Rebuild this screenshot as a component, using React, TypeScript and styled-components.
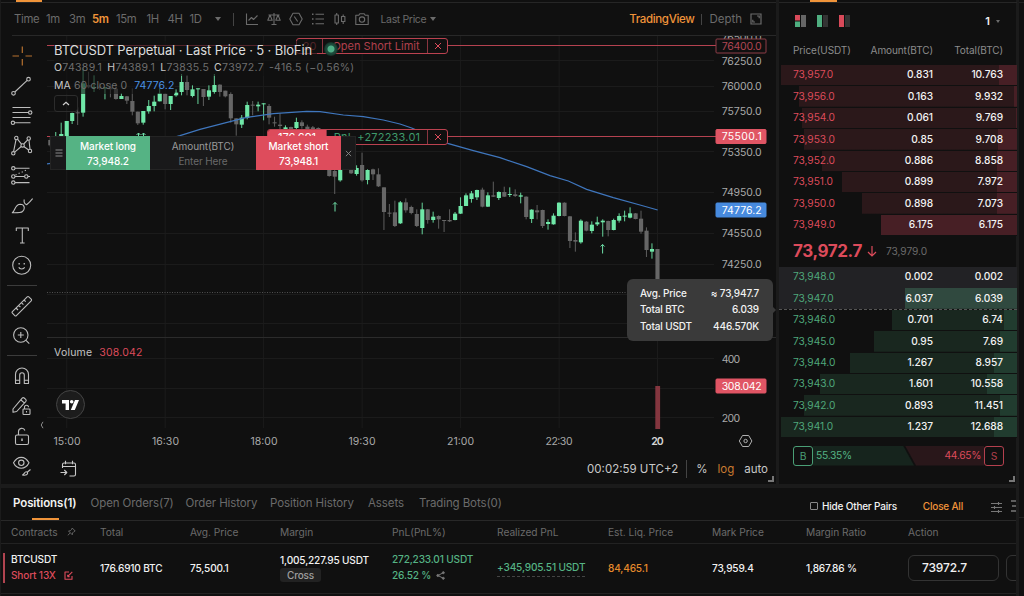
import React from "react";
import styled, { createGlobalStyle } from "styled-components";

const c = {
  bg: "#101010",
  gutter: "#1b1b1b",
  orange: "#f0943a",
  red: "#dd4b5b",
  green: "#55b384",
  dim: "#6b6b6b",
  text: "#f2f2f2",
  blue: "#4a90e2",
};

const Global = createGlobalStyle`
  * { box-sizing: border-box; }
  body { margin: 0; background: ${c.bg}; overflow: hidden; }
  svg { display: block; flex: none; }
`;

const Page = styled.div`
  width: 1024px;
  height: 596px;
  overflow: hidden;
  display: grid;
  grid-template-columns: 1fr 8px;
  background: ${c.bg};
  color: ${c.text};
  font-family: Inter, "Liberation Sans", sans-serif;
  font-size: 10.5px;
  white-space: nowrap;
`;

const Workspace = styled.div`
  display: grid;
  grid-template-rows: 484px 1fr;
  min-width: 0;
  border-left: 1px solid ${c.gutter};
`;

const Upper = styled.div`
  display: grid;
  grid-template-columns: 775px 1fr;
  min-width: 0;
`;

const SideStrip = styled.div`
  border-left: 3px solid ${c.gutter};
  background: linear-gradient(#222, #222) 0 2px / 100% 1px no-repeat, linear-gradient(#222, #222) 0 517px / 100% 1px no-repeat;
`;

/* Chart panel */

const ChartPanel = styled.section`
  display: grid;
  grid-template-rows: 3px 32px 1px 416px 1fr;
  min-width: 0;
`;

const TabEdge = styled.div<{ $left: number; $width: number }>`
  height: 3px;
  border-bottom: 1px solid #262626;
  padding-left: ${(p) => p.$left}px;
  &::before {
    content: "";
    display: block;
    width: ${(p) => p.$width}px;
    height: 2px;
    background: ${c.orange};
  }
`;

const Toolbar = styled.div`
  display: flex;
  align-items: center;
  justify-content: space-between;
  padding: 0 14px 0 13px;
  color: ${c.dim};
`;

const ToolGroup = styled.div`
  display: flex;
  align-items: center;
`;

const Interval = styled.span<{ $w: number; $active?: boolean }>`
  width: ${(p) => p.$w}px;
  font-size: 11.3px;
  letter-spacing: -0.3px;
  color: ${(p) => (p.$active ? c.orange : c.dim)};
  font-weight: ${(p) => (p.$active ? 600 : 400)};
`;

const Caret = styled.i<{ $size?: number }>`
  border: ${(p) => p.$size ?? 3.5}px solid transparent;
  border-top: ${(p) => (p.$size ?? 3.5) + 1}px solid ${c.dim};
  border-bottom: 0;
`;

const VRule = styled.i<{ $h: number; $m: string }>`
  width: 1px;
  height: ${(p) => p.$h}px;
  margin: ${(p) => p.$m};
  background: #444;
`;

const IconRow = styled.div`
  display: flex;
  align-items: center;
  gap: 8px;
`;

const PriceMode = styled.span`
  display: flex;
  align-items: center;
  gap: 4px;
  margin-left: 12px;
  font-size: 10.5px;
  letter-spacing: -0.35px;
`;

const ViewLink = styled.span<{ $active?: boolean }>`
  font-size: 11.5px;
  color: ${(p) => (p.$active ? c.orange : c.dim)};
  font-weight: ${(p) => (p.$active ? 500 : 400)};
  letter-spacing: ${(p) => (p.$active ? "-0.35px" : "0")};
`;

const ExpandIcon = styled.svg`
  margin-left: 8px;
`;

const ToolbarLine = styled.div`
  margin-left: 11px;
  background: #282828;
`;

const ChartBody = styled.div`
  display: grid;
  grid-template-columns: 46px 729px;
  grid-row: 4 / 6;
  min-height: 0;
`;

const DrawTools = styled.nav`
  display: flex;
  flex-direction: column;
  padding-top: 5px;
  position: relative;
  color: #bdbdbd;
`;

const DrawTool = styled.div<{ $color?: string }>`
  height: 30px;
  flex: none;
  width: 40px;
  display: flex;
  align-items: center;
  justify-content: center;
  color: ${(p) => p.$color ?? "inherit"};
`;

const ToolDivider = styled.div`
  height: 10px;
  flex: none;
  padding: 4px 0 0 6px;
  &::before {
    content: "";
    display: block;
    width: 30px;
    height: 1px;
    background: #3c3c3c;
  }
`;

const Collapse = styled.div`
  position: absolute;
  left: 39px;
  top: 385px;
`;

const ChartColumn = styled.div`
  display: flex;
  flex-direction: column;
  position: relative;
`;

const Legend = styled.div`
  position: absolute;
  left: 7px;
  top: 5px;
  display: flex;
  flex-direction: column;
  align-items: flex-start;
`;

const LegendTitle = styled.div`
  height: 17px;
  line-height: 18px;
  padding-right: 5px;
  font-size: 13px;
  letter-spacing: -0.12px;
  color: #dcdcdc;
  background: rgba(16, 16, 16, 0.6);
`;

const LegendLine = styled.div<{ $ls?: number }>`
  height: 18px;
  line-height: 19px;
  font-size: 10.5px;
  letter-spacing: ${(p) => p.$ls ?? 0.3}px;
  color: #6e6e6e;
  background: rgba(16, 16, 16, 0.6);
  b { font-weight: 400; color: #c8c8c8; }
  span { margin-right: 5px; }
  em { font-style: normal; color: ${c.blue}; margin-left: 7px; }
`;

const LegendToggle = styled.div`
  width: 24px;
  height: 17px;
  margin-top: 1px;
  border: 1px solid #2c2c2c;
  border-radius: 3px;
  display: flex;
  align-items: center;
  justify-content: center;
  color: #d0d0d0;
`;

const OrderTag = styled.div<{ $left: number; $top: number; $width: number }>`
  position: absolute;
  left: ${(p) => p.$left}px;
  top: ${(p) => p.$top}px;
  width: ${(p) => p.$width}px;
  height: 16px;
  display: flex;
  border: 1px solid #bb4250;
  border-radius: 3px;
  overflow: hidden;
  background: ${c.bg};
  font-size: 11px;
  line-height: 14px;
  text-align: center;
`;

const TagQty = styled.span<{ $w: number; $filled?: boolean }>`
  width: ${(p) => p.$w}px;
  border-right: 1px solid #8a3540;
  color: ${(p) => (p.$filled ? "#fff" : "#a83e4a")};
  background: ${(p) => (p.$filled ? c.red : "transparent")};
`;

const TagLabel = styled.span<{ $profit?: boolean }>`
  flex: 1;
  letter-spacing: ${(p) => (p.$profit ? 0.2 : 0)}px;
  padding-left: ${(p) => (p.$profit ? 0 : 2)}px;
  color: ${(p) => (p.$profit ? "#3f9a6c" : "#b0404d")};
`;

const TagClose = styled.span`
  width: 20px;
  border-left: 1px solid #8a3540;
  display: flex;
  align-items: center;
  justify-content: center;
  color: ${c.red};
`;

const LiveDot = styled.i`
  position: absolute;
  left: 277px;
  top: 6px;
  width: 14px;
  height: 14px;
  border-radius: 50%;
  background: radial-gradient(circle, #4fae86 0 3px, #1c4a3b 4px 5px, rgba(20, 48, 38, 0.85) 7px);
`;

const TradePanel = styled.div`
  position: absolute;
  left: 3px;
  top: 100px;
  width: 306px;
  height: 34px;
  display: grid;
  grid-template-columns: 15px 84px 106px 85px 14px;
  background: #19191a;
  border: 1px solid #242424;
  font-size: 10px;
  letter-spacing: -0.1px;
`;

const PanelGrip = styled.div`
  display: flex;
  align-items: center;
  justify-content: center;
  color: #8a8a8a;
`;

const PanelCell = styled.div<{ $tone?: string }>`
  margin: -1px 0;
  padding: 3px 0 0;
  text-align: center;
  line-height: 14.5px;
  background: ${(p) => p.$tone ?? "transparent"};
  color: ${(p) => (p.$tone ? "#fff" : "#9a9a9a")};
  font-weight: ${(p) => (p.$tone ? 500 : 400)};
  small { display: block; font-size: 10px; color: ${(p) => (p.$tone ? "#fff" : "#6a6a6a")}; }
`;

const VolumeLegend = styled.div`
  position: absolute;
  left: 7px;
  top: 310px;
  font-size: 10.5px;
  line-height: 14px;
  letter-spacing: 0.2px;
  color: #c4c4c4;
  em { font-style: normal; color: ${c.red}; margin-left: 7px; }
`;

const TvBadge = styled.div`
  position: absolute;
  left: 9px;
  top: 354px;
  width: 29px;
  height: 29px;
  border: 1px solid #444;
  border-radius: 50%;
  background: #1c1c1c;
  display: flex;
  align-items: center;
  justify-content: center;
`;

const ChartFooter = styled.div`
  flex: 1;
  display: flex;
  align-items: center;
  padding: 2px 8px 0 13px;
  font-size: 11.5px;
  color: #c9c9c9;
  > svg { margin-bottom: 2px; }
`;

const FooterClock = styled.span`
  margin-left: auto;
  letter-spacing: 0;
`;

const FooterMode = styled.span<{ $active?: boolean }>`
  margin-left: 10px;
  color: ${(p) => (p.$active ? "#c97b30" : "#c9c9c9")};
`;

const Corner = styled.i`
  position: absolute;
  right: 2px;
  bottom: 2px;
  width: 6px;
  height: 6px;
  border-right: 2px solid #777;
  border-bottom: 2px solid #777;
`;

const DepthTooltip = styled.div`
  position: absolute;
  right: 3px;
  top: 243px;
  width: 146px;
  height: 61.5px;
  padding: 5.5px 14px 0 13px;
  background: #3a3a3a;
  border-radius: 6px;
  font-size: 10px;
  font-weight: 500;
  letter-spacing: -0.15px;
  &::after {
    content: "";
    position: absolute;
    right: -3px;
    top: 28px;
    border: 3px solid transparent;
    border-left-color: #3a3a3a;
    border-right: 0;
  }
`;

const TooltipRow = styled.div`
  display: flex;
  justify-content: space-between;
  line-height: 16.5px;
`;

/* Order book */

const Book = styled.section`
  position: relative;
  border-left: 3px solid ${c.gutter};
  display: grid;
  grid-template-rows: 3px 35px 27px 171px 31px 171px 1fr;
`;

const BookModes = styled.div`
  display: flex;
  align-items: center;
  gap: 10px;
  padding: 1px 17px 0 15px;
`;

const Precision = styled.span`
  margin-left: auto;
  display: flex;
  align-items: center;
  gap: 6px;
  font-weight: 600;
  font-size: 11px;
`;

const bookColumns = "grid-template-columns: 64px 76px 70px; padding-left: 14px;";

const BookHead = styled.div`
  display: grid;
  ${bookColumns}
  line-height: 24px;
  font-size: 10px;
  letter-spacing: -0.1px;
  color: #8c8c8c;
  span + span { text-align: right; }
`;

const BookSide = styled.div`
  display: grid;
  grid-template-rows: repeat(8, 1fr);
`;

const BookRow = styled.div<{ $buy?: boolean; $total: number; $amount: number; $hover?: boolean; $edge?: boolean }>`
  display: grid;
  ${bookColumns}
  align-items: center;
  padding-bottom: 1.5px;
  font-size: 10.2px;
  font-weight: 500;
  letter-spacing: -0.05px;
  border-bottom: 1px solid ${(p) => (p.$hover && !p.$edge ? "#222225" : c.bg)};
  ${(p) => p.$edge && "border-bottom: 1px dashed #555;"}
  background:
    linear-gradient(${(p) => (p.$hover ? "#30493f, #30493f" : p.$buy ? "#213c2f, #213c2f" : "#471f25, #471f25")}) right / ${(p) => p.$amount}px 100% no-repeat,
    linear-gradient(${(p) => (p.$buy ? "#19271f, #19271f" : "#2b181a, #2b181a")}) right / ${(p) => p.$total}px 100% no-repeat,
    ${(p) => (p.$hover ? "#222225" : c.bg)};
  background-clip: padding-box;
  span + span { text-align: right; }
  span:first-child { color: ${(p) => (p.$buy ? "#4fa87b" : c.red)}; font-weight: 400; }
`;

const LastPrice = styled.div`
  display: flex;
  align-items: center;
  padding: 0 0 1px 14px;
  color: ${c.red};
  b { font-size: 17px; font-weight: 700; letter-spacing: -0.4px; width: 74px; }
  span { margin-left: 9px; color: ${c.dim}; font-size: 10.2px; letter-spacing: -0.05px; }
`;

const RatioBar = styled.div`
  margin: 7.5px 13px 0 14px;
  height: 20px;
  display: flex;
  align-items: stretch;
  line-height: 19px;
  font-size: 10.3px;
  letter-spacing: -0.3px;
`;

const RatioBadge = styled.span<{ $color: string }>`
  width: 20px;
  line-height: 18px;
  text-align: center;
  border: 1px solid ${(p) => p.$color};
  color: ${(p) => p.$color};
  border-radius: 3px;
`;

const RatioFill = styled.span<{ $side: "buy" | "sell" }>`
  width: ${(p) => (p.$side === "buy" ? 101 : 79)}px;
  margin-left: ${(p) => (p.$side === "buy" ? 0 : -9)}px;
  padding: 0 3px;
  text-align: ${(p) => (p.$side === "buy" ? "left" : "right")};
  color: ${(p) => (p.$side === "buy" ? c.green : c.red)};
  background: ${(p) => (p.$side === "buy" ? "#16241d" : "#29171a")};
  clip-path: ${(p) =>
    p.$side === "buy"
      ? "polygon(0 0, calc(100% - 11px) 0, 100% 100%, 0 100%)"
      : "polygon(0 0, 100% 0, 100% 100%, 11px 100%)"};
`;

/* Positions */

const Positions = styled.section`
  border-top: 4px solid ${c.gutter};
  display: grid;
  grid-template-rows: 33px 23px 50px 1fr;
  overflow: hidden;
  min-width: 0;
`;

const TabBar = styled.div`
  display: flex;
  align-items: center;
  border-bottom: 1px solid #282828;
  padding-left: 12px;
  font-size: 11.5px;
`;

const Tab = styled.span<{ $active?: boolean; $w: number }>`
  width: ${(p) => p.$w}px;
  height: 32px;
  line-height: 31px;
  position: relative;
  letter-spacing: -0.1px;
  color: ${(p) => (p.$active ? c.text : c.dim)};
  font-weight: ${(p) => (p.$active ? 600 : 400)};
  ${(p) => p.$active && `&::after {
    content: ""; position: absolute; left: 19px; bottom: 0; width: 27px; height: 2px; background: ${c.orange};
  }`}
`;

const TabActions = styled.div`
  margin-left: auto;
  display: flex;
  align-items: center;
  padding-top: 4px;
  font-size: 10px;
  font-weight: 500;
  letter-spacing: -0.2px;
  svg { margin-top: 3px; }
`;

const Checkbox = styled.i`
  width: 8px;
  height: 8px;
  border: 1px solid #888;
  border-radius: 1px;
  margin-right: 4px;
`;

const CloseAll = styled.span`
  color: ${c.orange};
  margin: 0 28px 0 26px;
`;

const Row = styled.div<{ $head?: boolean }>`
  display: grid;
  grid-template-columns: 89px 90px 90px 112px 105px 111px 104px 94px 102px 1fr;
  align-items: center;
  padding: 0 0 1px 10px;
  min-width: 0;
  overflow: hidden;
  border-bottom: 1px solid #222;
  font-size: ${(p) => (p.$head ? 10.2 : 10.1)}px;
  font-weight: ${(p) => (p.$head ? 400 : 500)};
  letter-spacing: ${(p) => (p.$head ? -0.03 : -0.17)}px;
  color: ${(p) => (p.$head ? c.dim : c.text)};
`;

const PositionRow = styled(Row)`
  padding-bottom: 2px;
  background: linear-gradient(#b04450, #b04450) 2px 9px / 2px 30px no-repeat;
`;

const Stack = styled.div`
  display: flex;
  flex-direction: column;
  line-height: 15.5px;
`;

const Cell = styled.span<{ $color?: string; $gap?: number }>`
  display: flex;
  align-items: center;
  gap: ${(p) => p.$gap ?? 0}px;
  color: ${(p) => p.$color ?? "inherit"};
`;

const Realized = styled.span`
  justify-self: start;
  color: ${c.green};
  line-height: 17px;
  border-bottom: 1px dashed #444;
`;

const CrossPill = styled.span`
  align-self: flex-start;
  background: #222;
  border-radius: 3px;
  padding: 0 7px;
  line-height: 14px;
  font-size: 10px;
  color: #a0a0a0;
`;

const ActionCell = styled.div`
  display: flex;
  gap: 7px;
`;

const PriceInput = styled.div`
  flex: none;
  width: 91px;
  height: 26px;
  border: 1px solid #333;
  border-radius: 6px;
  padding-left: 13px;
  line-height: 23px;
  font-size: 12px;
`;

/* Candles on a five-minute step. Levels are in thirds of a pixel:
   [index, rising, high, body top, body bottom, low] */
type Candle = [number, 0 | 1, number, number, number, number];

const candles: Candle[] = [
  [-3, 0, 412, 420, 436, 440],
  [-2, 1, 396, 410, 420, 424],
  [-1, 1, 368, 402, 420, 420],
  [0, 1, 363, 363, 410, 410],
  [1, 1, 338, 339, 363, 372],
  [2, 0, 322, 337, 340, 375],
  [3, 1, 205, 250, 338, 350],
  [4, 0, 215, 255, 262, 265],
  [5, 1, 226, 261, 264, 276],
  [6, 0, 248, 260, 264, 270],
  [7, 1, 262, 262, 265, 298],
  [8, 0, 250, 262, 268, 292],
  [9, 0, 255, 266, 297, 299],
  [10, 1, 280, 288, 297, 297],
  [11, 0, 288, 289, 302, 312],
  [12, 0, 265, 303, 335, 346],
  [13, 0, 335, 335, 370, 375],
  [14, 1, 333, 333, 368, 374],
  [15, 1, 300, 318, 334, 341],
  [16, 1, 287, 305, 318, 334],
  [17, 1, 264, 280, 304, 304],
  [18, 0, 280, 281, 312, 328],
  [19, 1, 288, 288, 312, 330],
  [20, 1, 268, 278, 286, 290],
  [21, 1, 222, 246, 276, 286],
  [22, 0, 225, 246, 270, 286],
  [23, 1, 256, 268, 288, 292],
  [24, 1, 265, 265, 268, 312],
  [25, 0, 267, 267, 291, 318],
  [26, 1, 256, 271, 290, 300],
  [27, 1, 222, 255, 276, 281],
  [28, 0, 253, 254, 276, 290],
  [29, 0, 272, 272, 289, 292],
  [30, 0, 277, 282, 355, 368],
  [31, 0, 355, 355, 373, 407],
  [32, 1, 345, 353, 374, 384],
  [33, 1, 305, 315, 354, 358],
  [34, 0, 303, 314, 317, 346],
  [35, 1, 305, 314, 319, 334],
  [36, 1, 310, 310, 313, 361],
  [37, 0, 312, 318, 353, 373],
  [38, 0, 350, 367, 370, 380],
  [39, 0, 340, 374, 378, 388],
  [40, 1, 376, 382, 388, 390],
  [41, 0, 380, 381, 388, 392],
  [42, 1, 353, 366, 384, 390],
  [43, 0, 361, 367, 378, 386],
  [44, 0, 374, 380, 390, 398],
  [45, 0, 378, 382, 400, 410],
  [46, 0, 382, 384, 420, 430],
  [47, 0, 410, 420, 470, 490],
  [48, 0, 450, 460, 528, 530],
  [49, 0, 500, 513, 530, 582],
  [50, 1, 500, 505, 541, 545],
  [51, 1, 490, 495, 508, 510],
  [52, 0, 500, 502, 520, 522],
  [53, 1, 496, 504, 522, 527],
  [54, 0, 458, 495, 541, 545],
  [55, 1, 508, 510, 540, 553],
  [56, 0, 506, 508, 523, 540],
  [57, 0, 505, 523, 559, 561],
  [58, 0, 562, 562, 636, 690],
  [59, 0, 612, 638, 641, 651],
  [60, 0, 602, 637, 678, 681],
  [61, 1, 603, 607, 670, 672],
  [62, 0, 595, 607, 631, 638],
  [63, 0, 617, 621, 639, 643],
  [64, 0, 628, 642, 678, 681],
  [65, 1, 608, 628, 684, 703],
  [66, 0, 627, 628, 660, 671],
  [67, 1, 635, 650, 660, 668],
  [68, 0, 646, 648, 658, 686],
  [69, 0, 660, 660, 663, 696],
  [70, 0, 628, 660, 664, 666],
  [71, 1, 636, 641, 660, 661],
  [72, 1, 592, 618, 641, 642],
  [73, 1, 580, 586, 618, 618],
  [74, 1, 573, 580, 597, 608],
  [75, 1, 569, 570, 592, 600],
  [76, 0, 563, 569, 620, 622],
  [77, 1, 577, 586, 620, 621],
  [78, 0, 545, 586, 590, 591],
  [79, 1, 574, 576, 594, 600],
  [80, 0, 560, 576, 590, 591],
  [81, 1, 562, 582, 585, 591],
  [82, 0, 568, 583, 588, 591],
  [83, 1, 578, 586, 590, 610],
  [84, 0, 589, 590, 651, 658],
  [85, 1, 628, 629, 657, 669],
  [86, 0, 615, 631, 637, 658],
  [87, 0, 629, 630, 678, 684],
  [88, 1, 658, 666, 672, 689],
  [89, 1, 640, 647, 673, 674],
  [90, 1, 607, 608, 648, 649],
  [91, 0, 607, 608, 648, 649],
  [92, 0, 648, 649, 723, 744],
  [93, 0, 697, 720, 725, 755],
  [94, 1, 658, 662, 727, 731],
  [95, 0, 663, 665, 692, 694],
  [96, 1, 664, 674, 693, 700],
  [97, 1, 650, 667, 673, 678],
  [98, 1, 658, 662, 667, 710],
  [99, 0, 662, 663, 690, 709],
  [100, 1, 656, 660, 690, 691],
  [101, 1, 640, 648, 662, 668],
  [102, 1, 632, 647, 650, 664],
  [103, 1, 622, 640, 653, 655],
  [104, 0, 639, 640, 657, 658],
  [105, 0, 632, 656, 695, 701],
  [106, 0, 682, 692, 750, 771],
  [107, 1, 730, 747, 755, 776],
  [108, 0, 747, 747, 860, 865],
];

const maLine =
  "140,492 200,484 330,460 460,430 540,407 600,388 690,365 740,352 820,341 920,334 960,335 1030,345 1090,350 1150,360 1200,372 1235,384 1343,430 1420,452 1500,473 1580,500 1650,527 1705,543 1760,568 1840,593 1920,615 1973,630";

const verticals = [66.7, 165.2, 263.6, 362.1, 460.6, 559.1, 657.5];
const horizontals = [60.5, 86.5, 111.5, 151.5, 192.5, 233.5, 264.5, 294.5, 323.5, 358.5, 388.5, 417.5];
const prices: [string, number][] = [
  ["76500.0", 37],
  ["76250.0", 61.5],
  ["76000.0", 86.5],
  ["75750.0", 111.5],
  ["75350.0", 152],
  ["74950.0", 192.5],
  ["74550.0", 233],
  ["74250.0", 264.5],
];
const times: [string, number][] = [
  ["15:00", 67],
  ["16:30", 165.5],
  ["18:00", 264],
  ["19:30", 362],
  ["21:00", 460.5],
  ["22:30", 559],
];

function PriceTag({ y, label, fill, stroke, color }: { y: number; label: string; fill: string; stroke?: string; color: string }) {
  return (
    <g>
      <rect x={716} y={y - 7} width={50} height={14} rx={1} fill={fill} stroke={stroke ?? fill} />
      <text x={721.7} y={y + 3.8} fill={color} textLength={40}>{label}</text>
    </g>
  );
}

function Chart() {
  const arrow = (x: number, y: number) => (
    <path key={x} d={`M${x} ${y + 9}V${y}M${x - 2} ${y + 2}l2 -2l2 2`} fill="none" stroke="#6fdfa8" strokeWidth="1" />
  );
  return (
    <svg width="729" height="416" viewBox="47 36 729 416" fontFamily="Inter, sans-serif" fontSize="10.5" fill="#a9a9a9">
      <g stroke="#1b1b1b">
        {verticals.map((x) => <line key={x} x1={x} x2={x} y1={36} y2={428} />)}
        {horizontals.map((y) => <line key={y} x1={47} x2={714} y1={y} y2={y} />)}
      </g>
      <line x1={47} x2={776} y1={337.5} y2={337.5} stroke="#2b2b2b" />
      <line x1={47} x2={714} y1={292.5} y2={292.5} stroke="#505050" strokeDasharray="1 1.5" />
      <g stroke="#b54250">
        <line x1={47} x2={716} y1={45.5} y2={45.5} />
        <line x1={47} x2={716} y1={136.5} y2={136.5} />
      </g>
      <g transform="scale(0.33333)">
        {candles.map(([i, up, hi, top, bottom, lo]) => {
          const x = 200 + i * 16.41;
          const tone = up ? "#70e8a8" : "#666";
          return (
            <g key={i} fill={tone}>
              <rect x={x - 1.6} y={hi} width={3.2} height={lo - hi} opacity={0.85} />
              <rect x={x - 6} y={top} width={12.4} height={bottom - top} />
            </g>
          );
        })}
        <polyline points={maLine} fill="none" stroke="#3f76bd" strokeWidth={3.6} />
      </g>
      {arrow(335, 202.5)}
      {arrow(602.6, 244.5)}
      {arrow(138.5, 133)}
      {arrow(143.5, 133)}
      <rect x={655.3} y={386} width={4.8} height={43} fill="#84363f" />
      {prices.map(([label, y]) => <text key={label} x={721.7} y={y + 3.8} textLength={40}>{label}</text>)}
      <text x={721.7} y={363} textLength={18.5}>400</text>
      <text x={721.7} y={422} textLength={18.5}>200</text>
      <PriceTag y={46} label="76400.0" fill={c.bg} stroke="#8d3c47" color="#b04653" />
      <PriceTag y={136.5} label="75500.1" fill="#e05564" color="#fff" />
      <PriceTag y={210} label="74776.2" fill="#478ade" color="#fff" />
      <PriceTag y={386} label="308.042" fill="#e05564" color="#fff" />
      {times.map(([label, x]) => <text key={label} x={x} y={444.8} textAnchor="middle" textLength={27}>{label}</text>)}
      <text x={657.4} y={444.8} textAnchor="middle" fill="#d5d5d5" fontWeight="600" textLength={12.5}>20</text>
      <g fill="none" stroke="#b0b0b0">
        <path d="M742.5 435.5h6.2l3.2 5.5l-3.2 5.5h-6.2l-3.2 -5.5z" />
        <circle cx="745.6" cy="441" r="1.7" />
      </g>
    </svg>
  );
}

function Glyph({ children, size = 24, w = 1.1 }: { children: React.ReactNode; size?: number; w?: number }) {
  return (
    <svg width={size} height={size} viewBox={`0 0 ${size} ${size}`} fill="none" stroke="currentColor" strokeWidth={w} strokeLinejoin="round">
      {children}
    </svg>
  );
}

function Sidebar() {
  return (
    <DrawTools>
      <DrawTool $color="#b5702f">
        <Glyph w={1.2}><path d="M13.3 2.5V9M13.3 15v6.500M3.500 12h6.500M16.500 12h6.500" /></Glyph>
      </DrawTool>
      <DrawTool>
        <Glyph><path d="M5.800 18L18.200 6.400" /><circle cx="4.500" cy="19.300" r="1.800" /><circle cx="19.500" cy="5.200" r="1.800" /></Glyph>
      </DrawTool>
      <DrawTool>
        <Glyph>
          <path d="M3.500 3.500h18M3.500 8.500h16M3.500 13.500h18M5.700 18.800h15.800" />
          <circle cx="21.200" cy="8.600" r="1.700" /><circle cx="3.900" cy="18.800" r="1.700" />
        </Glyph>
      </DrawTool>
      <DrawTool>
        <Glyph>
          <path d="M4.600 17.600L7 5.700M8.500 5.200l4 5M14.700 10l4-4.200M20 6.200l1 9M12.200 12.500l-6.500 5.700M14.800 12.500l4.900 3.500" />
          <circle cx="7.300" cy="4" r="1.700" /><circle cx="19.700" cy="4.500" r="1.700" /><circle cx="13.600" cy="11.400" r="1.700" />
          <circle cx="4.300" cy="19.300" r="1.700" /><circle cx="21" cy="17" r="1.700" />
        </Glyph>
      </DrawTool>
      <DrawTool>
        <Glyph>
          <path d="M6 4.300h14.500M6 12.500h9.500M19 12.500h2M6 18.600h14.500" />
          <path d="M6.500 11l12-5.500" strokeDasharray="1.200 2.200" />
          <circle cx="4.300" cy="4.300" r="1.700" /><circle cx="4.300" cy="18.600" r="1.700" /><circle cx="4.300" cy="12.500" r="1.700" /><circle cx="17.300" cy="12.500" r="1.700" />
        </Glyph>
      </DrawTool>
      <DrawTool>
        <Glyph>
          <path d="M3.300 18.800c3.200-2.300 2.300-8.300 8-8.500 4.500 0 5 4.700 2.200 7.200-1.800 1.500-4.800 1.300-10.200 1.300zM15.300 5.500c-.5 2-.2 4.600 2.300 5.200 1.500-1.200 3.800-3.400 6-6.200" />
        </Glyph>
      </DrawTool>
      <DrawTool>
        <Glyph><path d="M7.300 7V4h12v3M13.300 4v15M11 19h4.600" /></Glyph>
      </DrawTool>
      <DrawTool>
        <Glyph>
          <circle cx="12.700" cy="11.300" r="9" /><path d="M9.800 13.300c.8 2.200 5 2.200 5.800 0" />
          <path d="M9.500 9.700h1.300M14.600 9.700h1.300" strokeWidth="1.500" />
        </Glyph>
      </DrawTool>
      <ToolDivider />
      <DrawTool>
        <Glyph>
          <path d="M3.400 17.600L18.200 2.800c.5-.5 1.100-.5 1.600 0l2.400 2.400c.5.500.5 1.100 0 1.600L7.400 21.600c-.5.500-1.100.5-1.600 0l-2.400-2.400c-.5-.5-.5-1.100 0-1.600zM7 14l2 2M9.700 11.300l1.700 1.700M12.400 8.600l2 2M15 6l1.700 1.700" />
        </Glyph>
      </DrawTool>
      <DrawTool>
        <Glyph><circle cx="11.800" cy="11" r="7.200" /><path d="M17 16.300l3.300 3.300M8.800 11h6M11.800 8v6" /></Glyph>
      </DrawTool>
      <ToolDivider />
      <DrawTool>
        <Glyph>
          <path d="M6.500 19.500V10.500a6.500 6.500 0 0 1 13 0v9h-4.200v-8.500a2.300 2.300 0 0 0-4.600 0v8.500zM6.500 16.300h4.200M15.300 16.300h4.200" />
        </Glyph>
      </DrawTool>
      <DrawTool>
        <Glyph>
          <path d="M4 15L13.200 4.200c.6-.7 1.300-.7 2-.2l1.500 1.300c.7.600.7 1.300.2 2L7.700 17.500 4 18.300zM12 6l3.300 2.800" />
          <rect x="14" y="15" width="7" height="5.500" rx=".8" /><path d="M15.500 15v-1.800a2 2 0 0 1 4 0M17.500 17v1.500" />
        </Glyph>
      </DrawTool>
      <DrawTool>
        <Glyph>
          <rect x="6.500" y="11" width="13" height="9.500" rx="1.500" /><path d="M9.500 11V7.500a3.300 3.300 0 0 1 6.400-1" />
          <path d="M13 14.500v2.500" strokeWidth="1.500" />
        </Glyph>
      </DrawTool>
      <DrawTool>
        <Glyph>
          <path d="M4.500 8.800c4-7.300 11.500-7.300 15.500 0-3.500 7.300-12 7.300-15.500 0z" /><circle cx="12.300" cy="8.800" r="2.700" />
          <path d="M13.500 21c2 .3 4.500.2 5-1.200.4-1-.3-2-1.300-2-1.800 0-1.500 2.200-3.700 3.200zM18.500 18l3-2.500" />
        </Glyph>
      </DrawTool>
      <Collapse>
        <svg width="4" height="8" viewBox="0 0 4 8" fill="none" stroke="#8a8a8a"><path d="M3 .8L1.200 4L3 7.200" /></svg>
      </Collapse>
    </DrawTools>
  );
}

const Cross = ({ size = 8 }: { size?: number }) => (
  <svg width={size} height={size} viewBox="0 0 8 8" fill="none" stroke="currentColor"><path d="M1 1l6 6M7 1l-6 6" /></svg>
);

function TopIcons() {
  return (
    <IconRow>
      <Glyph size={14}><path d="M1.500 1.500v11h11.500M3.500 8.500l3-3 2 2 4-4" /></Glyph>
      <Glyph size={14}><path d="M7 1v11.500M4.500 12.500h5M1.500 3h11M3 3L.8 8.200h4.400zM11 3L8.800 8.200h4.400z" /></Glyph>
      <Glyph size={14}><path d="M4 1.200h6L13.200 7 10 12.800H4L.8 7zM5.300 4.500l3.400 5" /></Glyph>
      <Glyph size={14}><path d="M4.500 2.200h8.500M4.500 7h8.500M4.500 11.800h8.500" /><path d="M1 2.200h1.500M1 7h1.500M1 11.800h1.500" strokeWidth="1.500" /></Glyph>
      <Glyph size={14}><path d="M3.700 1v2M3.700 11v2M2 3h3.400v8H2zM10.200 2.500v2M10.200 9.500v2.500M8.500 4.500h3.400v5H8.500z" /></Glyph>
      <Glyph size={14}><path d="M.8 3.200h3l1-1.500h4.400l1 1.500h3v9.300H.8z" /><circle cx="7" cy="7.600" r="2.700" /></Glyph>
    </IconRow>
  );
}

const intervals: [string, number][] = [["Time", 32], ["1m", 23], ["3m", 23], ["5m", 24], ["15m", 30.5], ["1H", 21], ["4H", 22], ["1D", 25]];

type Level = [string, string, string, number, number];
const asks: Level[] = [
  ["73,957.0", "0.831", "10.763", 236, 18],
  ["73,956.0", "0.163", "9.932", 218, 3],
  ["73,954.0", "0.061", "9.769", 215, 1],
  ["73,953.0", "0.85", "9.708", 213, 19],
  ["73,952.0", "0.886", "8.858", 195, 20],
  ["73,951.0", "0.899", "7.972", 175, 20],
  ["73,950.0", "0.898", "7.073", 155, 20],
  ["73,949.0", "6.175", "6.175", 136, 136],
];
const bids: Level[] = [
  ["73,948.0", "0.002", "0.002", 0, 0],
  ["73,947.0", "6.037", "6.039", 112, 112],
  ["73,946.0", "0.701", "6.74", 125, 13],
  ["73,945.0", "0.95", "7.69", 143, 17],
  ["73,944.0", "1.267", "8.957", 167, 23],
  ["73,943.0", "1.601", "10.558", 197, 30],
  ["73,942.0", "0.893", "11.451", 213, 17],
  ["73,941.0", "1.237", "12.688", 236, 23],
];

const BookMode = ({ left, right }: { left: string[]; right: string }) => (
  <svg width="12" height="12" viewBox="0 0 12 12">
    {left.map((fill, i) => (
      <rect key={fill} x="1" y={i * 6.5} width="5" height={left.length > 1 ? 5.5 : 12} fill={fill} />
    ))}
    <rect x="7" width="5" height="12" fill={right} />
  </svg>
);

const heads = ["Total", "Avg. Price", "Margin", "PnL(PnL%)", "Realized PnL", "Est. Liq. Price", "Mark Price", "Margin Ratio", "Action"];
const tabs: [string, number][] = [["Open Orders(7)", 95], ["Order History", 84.5], ["Position History", 98], ["Assets", 51], ["Trading Bots(0)", 84]];

export default function App() {
  return (
    <Page>
      <Global />
      <Workspace>
        <Upper>
          <ChartPanel>
            <TabEdge $left={15} $width={26} />
            <Toolbar>
              <ToolGroup>
                {intervals.map(([label, w]) => <Interval key={label} $w={w} $active={label === "5m"}>{label}</Interval>)}
                <Caret />
                <VRule $h={13} $m="0 11px 0 12px" />
                <TopIcons />
                <PriceMode>Last Price <Caret /></PriceMode>
              </ToolGroup>
              <ToolGroup>
                <ViewLink $active>TradingView</ViewLink>
                <VRule $h={11} $m="0 7px" />
                <ViewLink>Depth</ViewLink>
                <ExpandIcon width="12" height="12" viewBox="0 0 12 12" fill="none" stroke={c.dim} strokeWidth="1.2">
                  <path d="M1 1h10v10H1zM7 3h2.200v2.200M5 9H2.800V6.800" />
                </ExpandIcon>
              </ToolGroup>
            </Toolbar>
            <ToolbarLine />
            <ChartBody>
              <Sidebar />
              <ChartColumn>
                <Chart />
                <OrderTag $left={249} $top={2} $width={152}>
                  <TagQty $w={26}>20</TagQty>
                  <TagLabel>Open Short Limit</TagLabel>
                  <TagClose><Cross /></TagClose>
                </OrderTag>
                <OrderTag $left={220} $top={93} $width={181}>
                  <TagQty $w={59} $filled>176.691</TagQty>
                  <TagLabel $profit>PnL +272233.01</TagLabel>
                  <TagClose><Cross /></TagClose>
                </OrderTag>
                <Legend>
                  <LegendTitle>BTCUSDT Perpetual · Last Price · 5 · BloFin</LegendTitle>
                  <LegendLine>
                    <b>O</b><span>74389.1</span><b>H</b><span>74389.1</span><b>L</b><span>73835.5</span><b>C</b><span>73972.7</span>
                    <span>-416.5 (−0.56%)</span>
                  </LegendLine>
                  <LegendLine $ls={0.1}><b>MA</b> 60 close 0<em>74776.2</em></LegendLine>
                  <LegendToggle>
                    <svg width="8" height="5" viewBox="0 0 8 5" fill="none" stroke="currentColor" strokeWidth="1.2"><path d="M1 4l3-2.800L7 4" /></svg>
                  </LegendToggle>
                </Legend>
                <LiveDot />
                <TradePanel>
                  <PanelGrip><Glyph size={8}><path d="M.5 1h7M.5 4h7M.5 7h7" /></Glyph></PanelGrip>
                  <PanelCell $tone="#55b384">Market long<small>73,948.2</small></PanelCell>
                  <PanelCell>Amount(BTC)<small>Enter Here</small></PanelCell>
                  <PanelCell $tone="#de4c5c">Market short<small>73,948.1</small></PanelCell>
                  <PanelGrip><Cross size={7} /></PanelGrip>
                </TradePanel>
                <VolumeLegend>Volume<em>308.042</em></VolumeLegend>
                <TvBadge>
                  <svg width="17" height="10" viewBox="0 0 17 10" fill="#fff">
                    <path d="M0 0h7v10H3.600V3.600H0zM13 0h4l-4.200 10H8.800z" /><circle cx="9.700" cy="1.800" r="1.800" />
                  </svg>
                </TvBadge>
                <ChartFooter>
                  <Glyph size={17}>
                    <path d="M2.500 8V4.500c0-1 .5-1.500 1.500-1.500h10c1 0 1.500.5 1.500 1.500v10c0 1-.5 1.500-1.500 1.500H9.500M2.500 6.500h13M5.500 .8v3.500M12.500 .8v3.500M.5 12.500h6M4.300 10l2.500 2.500-2.500 2.500" />
                  </Glyph>
                  <FooterClock>00:02:59 UTC+2</FooterClock>
                  <VRule $h={18} $m="0 -1px 0 8px" />
                  <FooterMode>%</FooterMode>
                  <FooterMode $active>log</FooterMode>
                  <FooterMode>auto</FooterMode>
                </ChartFooter>
                <DepthTooltip>
                  <TooltipRow><span>Avg. Price</span><span>≈ 73,947.7</span></TooltipRow>
                  <TooltipRow><span>Total BTC</span><span>6.039</span></TooltipRow>
                  <TooltipRow><span>Total USDT</span><span>446.570K</span></TooltipRow>
                </DepthTooltip>
                <Corner />
              </ChartColumn>
            </ChartBody>
          </ChartPanel>

          <Book>
            <TabEdge $left={31} $width={27} />
            <BookModes>
              <BookMode left={["#d94a5a", "#4fae80"]} right="#666" />
              <BookMode left={["#4fae80"]} right="#333" />
              <BookMode left={["#d94a5a"]} right="#333" />
              <Precision>1 <Caret $size={2.5} /></Precision>
            </BookModes>
            <BookHead><span>Price(USDT)</span><span>Amount(BTC)</span><span>Total(BTC)</span></BookHead>
            <BookSide>
              {asks.map(([p, a, t, total, amount]) => (
                <BookRow key={p} $total={total} $amount={amount}><span>{p}</span><span>{a}</span><span>{t}</span></BookRow>
              ))}
            </BookSide>
            <LastPrice>
              <b>73,972.7</b>
              <svg width="10" height="11" viewBox="0 0 10 11" fill="none" stroke="currentColor" strokeWidth="1.2"><path d="M5 0v10M1 6l4 4 4-4" /></svg>
              <span>73,979.0</span>
            </LastPrice>
            <BookSide>
              {bids.map(([p, a, t, total, amount], i) => (
                <BookRow key={p} $buy $total={total} $amount={amount} $hover={i < 2} $edge={i === 1}>
                  <span>{p}</span><span>{a}</span><span>{t}</span>
                </BookRow>
              ))}
            </BookSide>
            <RatioBar>
              <RatioBadge $color="#4a9f76">B</RatioBadge>
              <RatioFill $side="buy">55.35%</RatioFill>
              <RatioFill $side="sell">44.65%</RatioFill>
              <RatioBadge $color="#b5404e">S</RatioBadge>
            </RatioBar>
            <Corner />
          </Book>
        </Upper>

        <Positions>
          <TabBar>
            <Tab $active $w={77.5}>Positions(1)</Tab>
            {tabs.map(([label, w]) => <Tab key={label} $w={w}>{label}</Tab>)}
            <TabActions>
              <Checkbox />Hide Other Pairs
              <CloseAll>Close All</CloseAll>
              <svg width="11" height="11" viewBox="0 0 11 11" stroke="#777" strokeWidth="1.1">
                <path d="M0 1.500h11M0 5.500h11M0 9.500h11M7.500 0v3M3.500 4v3M7.500 8v3" />
              </svg>
              <svg width="14" height="16" viewBox="0 0 14 16" stroke="#777" strokeWidth="1.3"><path d="M9 1h5M10 6h4M9 11h5" /></svg>
            </TabActions>
          </TabBar>
          <Row $head>
            <Cell $gap={9}>
              Contracts
              <Glyph size={9} w={0.9}><path d="M5.200 1l3 3-1.200.5-1.500 1.500-.2 1.800L1.500 4l1.800-.2L4.800 2.200zM3.200 6L.8 8.300" /></Glyph>
            </Cell>
            {heads.map((h) => <span key={h}>{h}</span>)}
          </Row>
          <PositionRow>
            <Stack>
              <span>BTCUSDT</span>
              <Cell $color={c.red} $gap={8}>
                Short 13X
                <Glyph size={9}><path d="M5 1H1v7.300h7V5M3.800 5.300L8.300 .8M3.800 3.800v1.800h1.800" /></Glyph>
              </Cell>
            </Stack>
            <span>176.6910 BTC</span>
            <span>75,500.1</span>
            <Stack><span>1,005,227.95 USDT</span><CrossPill>Cross</CrossPill></Stack>
            <Stack>
              <Cell $color={c.green}>272,233.01 USDT</Cell>
              <Cell $color={c.green} $gap={5}>
                26.52 %
                <svg width="9" height="9" viewBox="0 0 9 9" fill="#777" stroke="#777"><path d="M7.300 1.700L2 4.500l5.300 2.800" fill="none" /><circle cx="7.300" cy="1.700" r="1" /><circle cx="1.800" cy="4.500" r="1" /><circle cx="7.300" cy="7.300" r="1" /></svg>
              </Cell>
            </Stack>
            <Realized>+345,905.51 USDT</Realized>
            <Cell $color="#e58a2c">84,465.1</Cell>
            <span>73,959.4</span>
            <span>1,867.86 %</span>
            <ActionCell><PriceInput>73972.7</PriceInput><PriceInput /></ActionCell>
          </PositionRow>
        </Positions>
      </Workspace>
      <SideStrip />
    </Page>
  );
}
